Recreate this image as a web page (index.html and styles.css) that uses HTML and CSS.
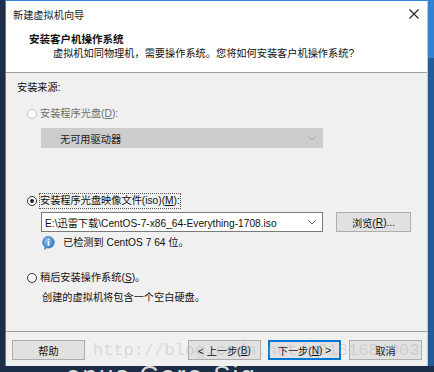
FILE: index.html
```html
<!DOCTYPE html>
<html lang="zh-CN">
  <head>
    <meta charset="UTF-8" />
    <title>新建虚拟机向导</title>
    <link rel="stylesheet" href="styles.css">
  </head>
  <body>
    <div class="screen">
      <div class="window">
        <div class="titlebar">
          <span class="title">新建虚拟机向导</span>
          <svg class="close" width="10" height="10" viewBox="0 0 10 10">
            <path d="M0.5 0.5 L9.5 9.5 M9.5 0.5 L0.5 9.5" stroke="#222" stroke-width="1.1" fill="none" />
          </svg>
        </div>

        <div class="header">
          <div class="header-title">安装客户机操作系统</div>
          <div class="header-sub">虚拟机如同物理机，需要操作系统。您将如何安装客户机操作系统?</div>
        </div>

        <div class="content">
          <div class="section-label">安装来源:</div>

          <div class="option disabled">
            <span class="radio"></span>
            <span>安装程序光盘(<u>D</u>):</span>
          </div>
          <div class="combo combo-disabled">
            <span>无可用驱动器</span>
            <svg class="chevron" width="8" height="5" viewBox="0 0 8 5">
              <path d="M0.5 0.5 L4 4 L7.5 0.5" stroke="#a8a8a8" fill="none" />
            </svg>
          </div>

          <div class="option option-iso">
            <span class="radio checked"></span>
            <span class="focus">安装程序光盘映像文件(iso)(<u>M</u>):</span>
          </div>
          <div class="iso-row">
            <div class="combo combo-path">
              <span>E:\迅雷下载\CentOS-7-x86_64-Everything-1708.iso</span>
              <svg class="chevron" width="8" height="5" viewBox="0 0 8 5">
                <path d="M0.5 0.5 L4 4 L7.5 0.5" stroke="#666" fill="none" />
              </svg>
            </div>
            <div class="button browse">浏览(<u>R</u>)...</div>
          </div>
          <div class="info">
            <svg class="info-icon" width="13" height="14" viewBox="0 0 13 14">
              <defs>
                <radialGradient id="ig" cx="0.4" cy="0.35" r="0.7">
                  <stop offset="0" stop-color="#8cc4f0" />
                  <stop offset="1" stop-color="#2c72c4" />
                </radialGradient>
              </defs>
              <path d="M6.5 0.5 A5.8 5.8 0 1 1 4.6 11.8 L2.6 13.5 L3 11 A5.8 5.8 0 0 1 6.5 0.5 Z" fill="url(#ig)" stroke="#2a62a8" stroke-width="0.6" />
              <rect x="5.8" y="5.2" width="1.5" height="4.6" fill="#fff" />
              <rect x="5.8" y="2.8" width="1.5" height="1.5" fill="#fff" />
            </svg>
            <span>已检测到 CentOS 7 64 位。</span>
          </div>

          <div class="option option-later">
            <span class="radio"></span>
            <span>稍后安装操作系统(<u>S</u>)。</span>
          </div>
          <div class="note">创建的虚拟机将包含一个空白硬盘。</div>
        </div>

        <div class="footer">
          <div class="button">帮助</div>
          <div class="spacer"></div>
          <div class="button">&lt; 上一步(<u>B</u>)</div>
          <div class="button default">下一步(<u>N</u>) &gt;</div>
          <div class="button">取消</div>
        </div>
      </div>
      <div class="desk-right">
        <div class="desk-right-top"></div>
      </div>
    </div>
    <div class="desk-strip">
      <div class="desk-text">enus Core Sig</div>
    </div>
    <div class="watermark">http://blog.csdn.net/u0181684003</div>
  </body>
</html>
```

FILE: styles.css
```css
body {
  margin: 0;
  width: 434px;
  height: 372px;
  overflow: hidden;
  background-color: #1b2d47;
  font-family: "Liberation Sans", "Noto Sans CJK SC", sans-serif;
  font-size: 10.2px;
  color: #111;
  position: relative;
}

.screen {
  display: flex;
  height: 366px;
  padding-left: 5px;
}

.window {
  width: 423px;
  height: 366px;
  box-sizing: border-box;
  border-left: 1px solid #2f86d6;
  border-top: 1px solid #2f86d6;
  border-right: 1px solid #c8c8c8;
  display: flex;
  flex-direction: column;
  background: #ffffff;
}

.titlebar {
  height: 27px;
  display: flex;
  align-items: center;
  justify-content: space-between;
  padding: 0 8px 0 7px;
}

.title {
  color: #222;
}

.close {
  margin-top: -2px;
}

.header {
  height: 44px;
  border-bottom: 1px solid #a0a0a0;
  padding-left: 23px;
}

.header-title {
  margin-top: 3px;
  line-height: 16px;
  font-weight: bold;
  font-size: 10.5px;
}

.header-sub {
  margin-left: 24px;
  line-height: 14px;
}

.content {
  flex: 1;
  background: #f0f0f0;
  padding: 8px 0 0 11px;
  border-bottom: 1px solid #a0a0a0;
}

.section-label {
  line-height: 14px;
}

.option {
  display: flex;
  align-items: center;
  gap: 3px;
  margin: 12px 0 0 10px;
  line-height: 14px;
}

.option.disabled {
  color: #6f6f6f;
}

.option-iso {
  margin-top: 46px;
}

.option-later {
  margin-top: 21px;
}

.radio {
  width: 10px;
  height: 10px;
  box-sizing: border-box;
  border: 1px solid #333;
  border-radius: 50%;
  background: #fff;
  display: flex;
  align-items: center;
  justify-content: center;
}

.option.disabled .radio {
  border-color: #c4c4c4;
}

.radio.checked::after {
  content: "";
  width: 4px;
  height: 4px;
  border-radius: 50%;
  background: #222;
}

.focus {
  outline: 1px dotted #555;
  outline-offset: 0;
}

.combo {
  width: 282px;
  height: 20px;
  box-sizing: border-box;
  display: flex;
  align-items: center;
  justify-content: space-between;
  padding-right: 6px;
}

.combo-disabled {
  margin: 7px 0 0 24px;
  background: #cccccc;
  border: 1px solid #cccccc;
  padding-left: 18px;
  color: #222;
}

.iso-row {
  display: flex;
  gap: 13px;
  margin: 4px 0 0 24px;
}

.combo-path {
  background: #fff;
  border: 1px solid #7a7a7a;
  padding-left: 3px;
}

.info {
  display: flex;
  align-items: center;
  gap: 8px;
  margin: 4px 0 0 25px;
  line-height: 14px;
}

.note {
  margin: 6px 0 0 25px;
  line-height: 14px;
}

.button {
  width: 73px;
  height: 20px;
  box-sizing: border-box;
  background: #e1e1e1;
  border: 1px solid #adadad;
  display: flex;
  align-items: center;
  justify-content: center;
}

.browse {
  width: 75px;
}

.button.default {
  border: 1px solid #0078d7;
  box-shadow: inset 0 0 0 1px #0078d7;
}

.footer {
  flex: none;
  height: 34px;
  background: #f0f0f0;
  display: flex;
  align-items: flex-start;
  gap: 7px;
  padding: 8px 5px 0 6px;
  box-sizing: border-box;
}

.footer .button:last-child {
  margin-left: 1px;
}

.spacer {
  flex: 1;
}

.desk-right {
  flex: 1;
  background: #245b97;
}

.desk-right-top {
  height: 58px;
  background: #3580d0;
}

.desk-strip {
  height: 6px;
  overflow: hidden;
}

.desk-text {
  margin: -4px 0 0 66px;
  font-family: "Liberation Sans", sans-serif;
  font-size: 26px;
  line-height: 26px;
  color: #dcdcdc;
  letter-spacing: 2px;
}

.watermark {
  position: absolute;
  left: 93px;
  top: 340px;
  font-family: "Liberation Mono", monospace;
  font-size: 17px;
  line-height: 22px;
  color: rgba(160, 160, 160, 0.3);
  white-space: nowrap;
  pointer-events: none;
}
```
